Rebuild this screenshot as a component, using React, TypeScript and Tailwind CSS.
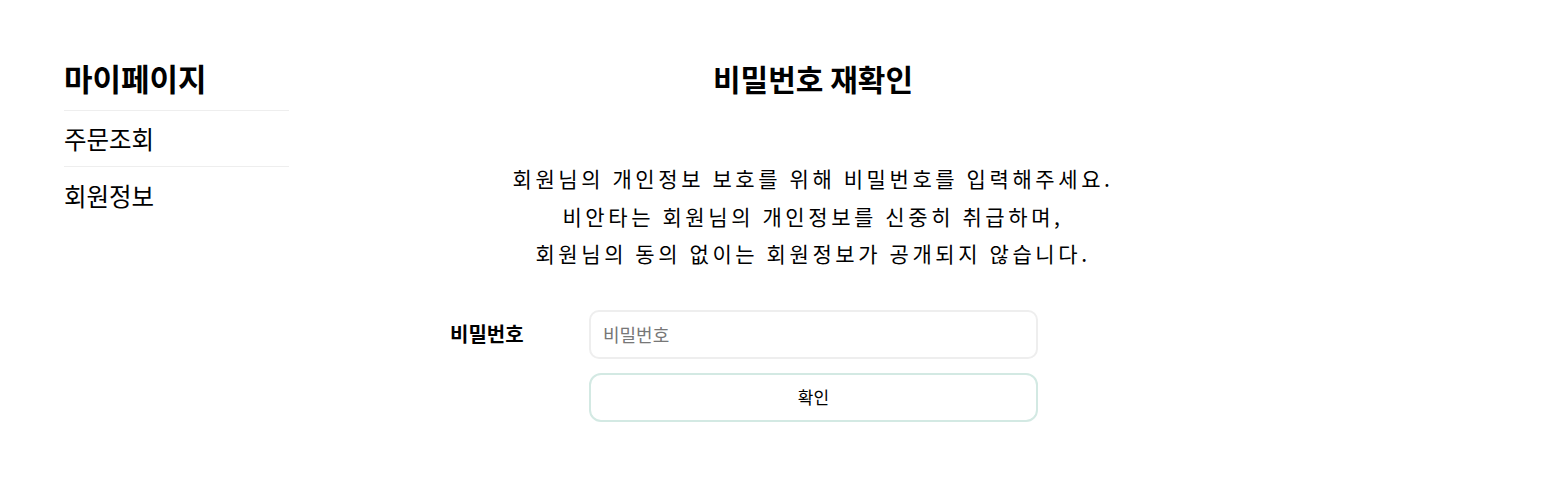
import React from "react";

export default function App() {
  const font = { fontFamily: '"Noto Sans CJK KR", "Noto Sans", sans-serif' };
  return (
    <div className="w-[1557px] h-[479px] bg-white text-black flex" style={font}>
      <aside className="ml-[64px] w-[225px] pt-[56px] shrink-0">
        <h2 className="text-[31px] font-semibold leading-[44px] pb-[10px] border-b border-[#eeeeee]">마이페이지</h2>
        <ul>
          <li className="text-[24.5px] leading-[55px] border-b border-[#eeeeee]">주문조회</li>
          <li className="text-[24.5px] leading-[58px]">회원정보</li>
        </ul>
      </aside>
      <main className="w-[1048px] pt-[56px] flex flex-col items-center">
        <h1 className="text-[30px] font-bold leading-[44px]">비밀번호 재확인</h1>
        <div className="mt-[60px] text-[21px] leading-[37.5px] tracking-[3.6px] text-center">
          <p>회원님의 개인정보 보호를 위해 비밀번호를 입력해주세요.</p>
          <p>비안타는 회원님의 개인정보를 신중히 취급하며,</p>
          <p>회원님의 동의 없이는 회원정보가 공개되지 않습니다.</p>
        </div>
        <div className="mt-[37px] w-[726px] flex flex-col gap-[14px]">
          <div className="flex items-center">
            <label className="w-[139px] shrink-0 text-[20px] font-semibold">비밀번호</label>
            <input
              type="password"
              placeholder="비밀번호"
              className="w-[449px] shrink-0 h-[49px] rounded-[10px] border-2 border-[#eeeeee] px-[12px] text-[18px] placeholder:text-[#777777] outline-none"
              style={font}
            />
          </div>
          <div className="flex">
            <div className="w-[139px] shrink-0" />
            <button
              className="w-[449px] shrink-0 h-[49px] rounded-[12px] border-2 border-[#d3e9e3] bg-white text-[17px]"
              style={font}
            >
              확인
            </button>
          </div>
        </div>
      </main>
    </div>
  );
}
